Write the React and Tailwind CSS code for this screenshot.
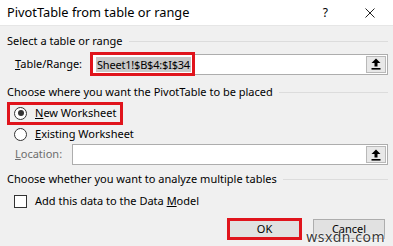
import React from 'react'

const FONT = { fontFamily: '"Noto Sans", "Open Sans", Arial, sans-serif' }

function Heading({ children, className = '' }) {
  return (
    <div className={`flex items-center gap-[6px] ${className}`}>
      <span className="whitespace-nowrap">{children}</span>
      <div className="flex-1 h-px bg-[#dcdcdc]" />
    </div>
  )
}

function UploadIcon() {
  return (
    <svg width="10" height="12" viewBox="0 0 10 12">
      <polygon points="5,0.5 9.5,5 6.5,5 6.5,8.5 3.5,8.5 3.5,5 0.5,5" fill="#000" />
      <rect x="0.5" y="10" width="9" height="1.6" fill="#000" />
    </svg>
  )
}

function RangeInput({ value, className = '' }) {
  return (
    <div className={`flex items-center h-[21px] bg-white border border-[#adadad] ${className}`}>
      <div className="flex-1 pl-[3px] flex items-center">
        {value && <span className="bg-[#c8c8c8] leading-[15px] px-px tracking-[-0.2px]">{value}</span>}
      </div>
      <button className="w-[20px] h-[17px] mr-px bg-[#e8e8e8] border border-[#b9b9b9] flex items-center justify-center">
        <UploadIcon />
      </button>
    </div>
  )
}

function Radio({ checked }) {
  return (
    <div className="w-[13px] h-[13px] rounded-full border border-[#333] bg-white flex items-center justify-center shrink-0">
      {checked && <div className="w-[6px] h-[6px] rounded-full bg-[#333]" />}
    </div>
  )
}

export default function App() {
  return (
    <div style={FONT} className="relative w-[393px] h-[246px] overflow-hidden bg-[#f0f0f0] text-[11px] text-[#000]">
      <div className="h-[26px] bg-white flex items-center pl-[7px] pr-[18px] border-b border-[#e6e6e6]">
        <span className="flex-1 text-[12.8px]">PivotTable from table or range</span>
        <span className="mr-[37px] text-[12px]">?</span>
        <svg width="10" height="10" viewBox="0 0 10 10">
          <path d="M0.5 0.5 L9.5 9.5 M9.5 0.5 L0.5 9.5" stroke="#222" strokeWidth="1" />
        </svg>
      </div>

      <div className="px-[7px] pr-[5px]">
        <Heading className="h-[18px] mt-[6px]">Select a table or range</Heading>

        <div className="flex items-center h-[24px] mt-[2px]">
          <span className="w-[85px] pl-[8px]"><u>T</u>able/Range:</span>
          <div className="relative flex-1">
            <RangeInput value="Sheet1!$B$4:$I$34" />
            <div className="absolute -left-[2px] -top-[2px] w-[105px] h-[24px] border-[3px] border-[#e0141c]" />
          </div>
        </div>

        <Heading className="h-[16px] mt-[8px]">Choose where you want the PivotTable to be placed</Heading>

        <div className="flex items-center h-[22px] mt-[2px] pl-[7px]">
          <div className="relative flex items-center gap-[8px]">
            <Radio checked />
            <span><u>N</u>ew Worksheet</span>
            <div className="absolute -left-[7px] -top-[3px] w-[116px] h-[23px] border-[3px] border-[#e0141c]" />
          </div>
        </div>
        <div className="flex items-center gap-[8px] h-[20px] pl-[7px]">
          <Radio />
          <span><u>E</u>xisting Worksheet</span>
        </div>

        <div className="flex items-center h-[21px]">
          <span className="w-[65px] pl-[8px] text-[#6d6d6d]"><u>L</u>ocation:</span>
          <RangeInput className="flex-1" />
        </div>

        <Heading className="h-[16px] mt-[6px]">Choose whether you want to analyze multiple tables</Heading>

        <div className="flex items-center gap-[8px] h-[20px] mt-[4px] pl-[7px]">
          <div className="w-[13px] h-[13px] border border-[#333] bg-white" />
          <span>Add this data to the Data <u>M</u>odel</span>
        </div>

        <div className="flex justify-end gap-[12px] mt-[8px] pr-[3px]">
          <div className="relative">
            <button className="w-[73px] h-[20px] bg-[#e1e1e1] border border-[#adadad] flex items-center justify-center">OK</button>
            <div className="absolute -left-px -top-px w-[75px] h-[22px] border-[3px] border-[#e0141c]" />
          </div>
          <button className="w-[72px] h-[20px] bg-[#e1e1e1] border border-[#adadad] flex items-center justify-center">Cancel</button>
        </div>
      </div>

      <span
        className="absolute right-[8px] bottom-[-1px] text-[14px] text-[#3a3a3a] tracking-[0.5px]"
        style={{ textShadow: '0 0 2px #fff, 0 0 2px #fff' }}
      >
        wsxdn.com
      </span>
    </div>
  )
}
